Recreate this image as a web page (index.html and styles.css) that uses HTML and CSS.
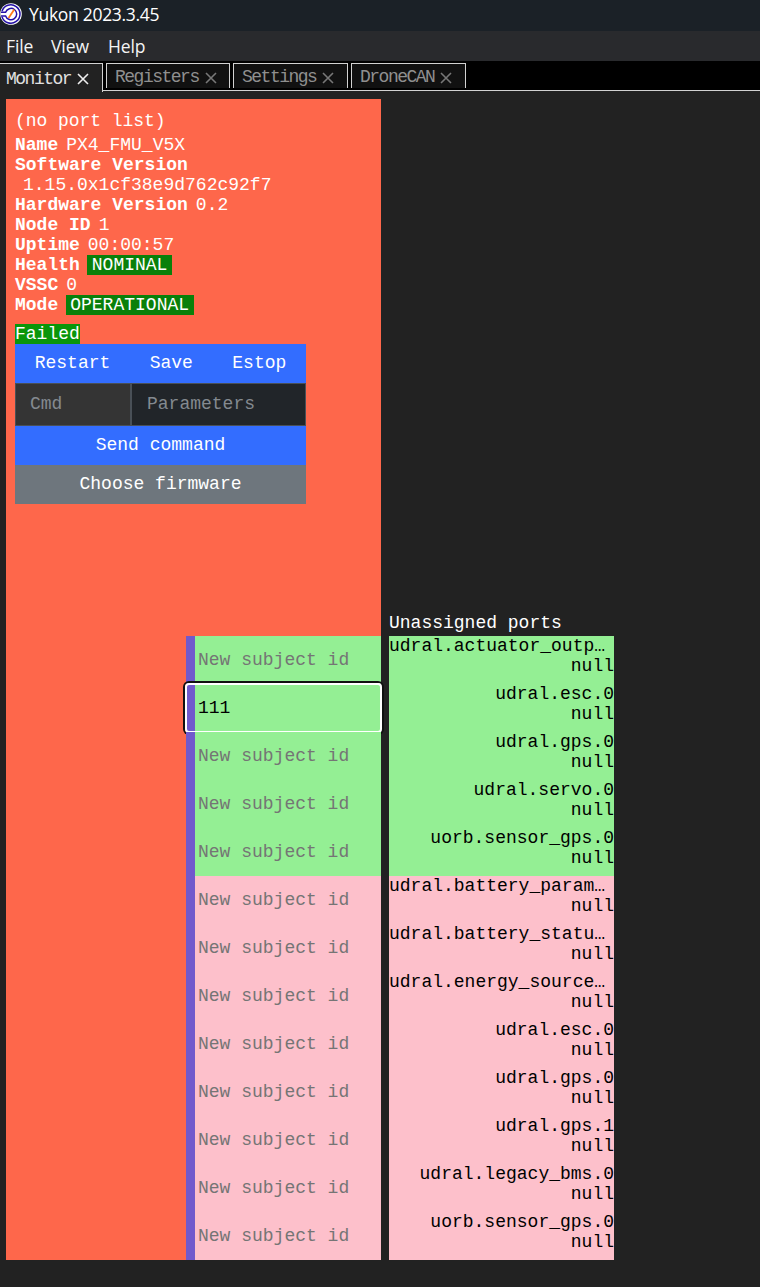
FILE: index.html
```
<!DOCTYPE html>
<html lang="en">
<head>
<meta charset="utf-8">
<title>Yukon 2023.3.45</title>
<link rel="stylesheet" href="styles.css">
</head>
<body>
<header class="titlebar">
  <svg class="logo" width="22" height="22" viewBox="0 0 22 22">
    <circle cx="11" cy="11" r="10.8" fill="#fff"/>
    <path d="M2 8.3A9.2 9.2 0 1 1 2 13.7" fill="none" stroke="#2410a8" stroke-width="1.5"/>
    <path d="M1 9.3H5.6A5.7 5.7 0 1 1 5.6 12.9H1" fill="none" stroke="#2410a8" stroke-width="1.5"/>
    <path d="M8.6 15L14.2 6.6" stroke="#ff7a1a" stroke-width="1.8"/>
  </svg>
  <span class="title">Yukon 2023.3.45</span>
</header>
<nav class="menu"><span class="file">File</span><span class="view">View</span><span class="help">Help</span></nav>
<div class="tabs">
  <div class="tab active"><span>Monitor</span><svg class="close" width="12" height="12" viewBox="0 0 12 12"><path d="M1 1L11 11M11 1L1 11"/></svg></div>
  <div class="tab registers"><span>Registers</span><svg class="close" width="12" height="12" viewBox="0 0 12 12"><path d="M1 1L11 11M11 1L1 11"/></svg></div>
  <div class="tab"><span>Settings</span><svg class="close" width="12" height="12" viewBox="0 0 12 12"><path d="M1 1L11 11M11 1L1 11"/></svg></div>
  <div class="tab"><span>DroneCAN</span><svg class="close" width="12" height="12" viewBox="0 0 12 12"><path d="M1 1L11 11M11 1L1 11"/></svg></div>
</div>
<main class="monitor">
  <section class="node">
    <div class="details">
      <div class="noports">(no port list)</div>
      <div class="line"><b>Name</b><span class="val">PX4_FMU_V5X</span></div>
      <div class="line"><b>Software Version</b></div>
      <div class="line"><span class="val">1.15.0x1cf38e9d762c92f7</span></div>
      <div class="line"><b>Hardware Version</b><span class="val">0.2</span></div>
      <div class="line"><b>Node ID</b><span class="val">1</span></div>
      <div class="line"><b>Uptime</b><span class="val">00:00:57</span></div>
      <div class="line"><b>Health</b><span class="val badge">NOMINAL</span></div>
      <div class="line"><b>VSSC</b><span class="val">0</span></div>
      <div class="line"><b>Mode</b><span class="val badge">OPERATIONAL</span></div>
      <div class="failed">Failed</div>
      <div class="controls">
        <div class="buttons"><span>Restart</span><span>Save</span><span>Estop</span></div>
        <div class="inputs"><span class="cmd">Cmd</span><span class="params">Parameters</span></div>
        <div class="btn send">Send command</div>
        <div class="btn choose">Choose firmware</div>
      </div>
    </div>
    <div class="subjects">
      <div class="subject">New subject id</div>
      <div class="subject focused">111</div>
      <div class="subject">New subject id</div>
      <div class="subject">New subject id</div>
      <div class="subject">New subject id</div>
      <div class="subject pink">New subject id</div>
      <div class="subject pink">New subject id</div>
      <div class="subject pink">New subject id</div>
      <div class="subject pink">New subject id</div>
      <div class="subject pink">New subject id</div>
      <div class="subject pink">New subject id</div>
      <div class="subject pink">New subject id</div>
      <div class="subject pink">New subject id</div>
    </div>
  </section>
  <section class="ports">
    <div class="heading">Unassigned ports</div>
    <div class="port"><span class="cut">udral.actuator_outp…</span><span>null</span></div>
    <div class="port"><span>udral.esc.0</span><span>null</span></div>
    <div class="port"><span>udral.gps.0</span><span>null</span></div>
    <div class="port"><span>udral.servo.0</span><span>null</span></div>
    <div class="port"><span>uorb.sensor_gps.0</span><span>null</span></div>
    <div class="port pink"><span class="cut">udral.battery_param…</span><span>null</span></div>
    <div class="port pink"><span class="cut">udral.battery_statu…</span><span>null</span></div>
    <div class="port pink"><span class="cut">udral.energy_source…</span><span>null</span></div>
    <div class="port pink"><span>udral.esc.0</span><span>null</span></div>
    <div class="port pink"><span>udral.gps.0</span><span>null</span></div>
    <div class="port pink"><span>udral.gps.1</span><span>null</span></div>
    <div class="port pink"><span>udral.legacy_bms.0</span><span>null</span></div>
    <div class="port pink"><span>uorb.sensor_gps.0</span><span>null</span></div>
  </section>
</main>
</body>
</html>
```
FILE: styles.css
```
* { box-sizing: border-box; }
body {
  margin: 0;
  height: 1287px;
  overflow: hidden;
  background: #222;
  color: #fff;
  font: 18px/20px "Courier New", "Liberation Mono", monospace;
  white-space: nowrap;
}
.titlebar, .menu { font-family: "Segoe UI", "Open Sans", "Noto Sans", sans-serif; }
.titlebar {
  display: flex;
  align-items: center;
  height: 31px;
  background: #1b2127;
  padding-bottom: 3px;
}
.logo { display: block; }
.title { margin-left: 7px; font-size: 17.5px; letter-spacing: -0.3px; }
.menu {
  display: flex;
  align-items: center;
  height: 30px;
  padding-left: 6px;
  background: #292a2d;
  font-size: 17.5px;
  letter-spacing: -0.1px;
}
.menu span { color: #f4f4f4; }
.file { width: 45px; }
.view { width: 57px; }
.tabs {
  display: flex;
  gap: 3px;
  height: 30px;
  padding-top: 2px;
  background: #000;
  border-bottom: 1px solid #d2d2d2;
}
.tab {
  display: flex;
  width: 115px;
  height: 25px;
  padding: 3px 0 0 8px;
  border: 1px solid #d2d2d2;
  border-bottom: 0;
  background: #111;
  color: #8f8f8f;
  letter-spacing: -1.5px;
}
.tab.registers { width: 124px; }
.tab.active {
  width: 103px;
  height: 29px;
  padding: 5px 0 0 6px;
  border-left: 0;
  background: #222;
  color: #e0e0e0;
}
.close {
  margin: 5px 0 0 6px;
  fill: none;
  stroke: #777;
  stroke-width: 1.6;
}
.active .close { stroke: #eee; margin-top: 4px; }
.monitor {
  display: flex;
  gap: 8px;
  padding: 8px 0 0 6px;
}
.node {
  display: flex;
  flex-direction: column;
  justify-content: space-between;
  width: 375px;
  height: 1161px;
  background: #fe674b;
}
.details { padding: 12px 0 0 9px; }
.noports { margin-bottom: 4px; letter-spacing: -0.05px; }
.line { display: flex; height: 20px; }
.val { margin-left: 8px; }
.badge { margin-left: 7.5px; padding: 0 4.5px; background: #0a800a; }
.failed {
  width: 65px;
  margin-top: 9px;
  background: #0a960a;
}
.controls { width: 291px; }
.buttons {
  display: flex;
  justify-content: space-around;
  height: 39px;
  background: #336dff;
  line-height: 39px;
}
.inputs {
  display: flex;
  height: 43px;
  line-height: 41px;
  color: #848a90;
}
.inputs span { border: 1px solid #495057; }
.cmd { width: 116px; padding-left: 14px; background: #343434; }
.params { width: 175px; padding-left: 15px; background: #212529; }
.btn { height: 39px; line-height: 39px; text-align: center; }
.send { background: #336dff; }
.choose { background: #6e767d; }
.subjects { width: 195px; margin-left: 180px; }
.subject {
  position: relative;
  z-index: 1;
  height: 48px;
  padding-left: 3px;
  border-left: 9px solid #7159cc;
  background: #94ef94;
  color: #757575;
  line-height: 48px;
}
.subject.focused { z-index: 0; color: #000; }
.focused::after {
  content: "";
  position: absolute;
  inset: -1px -1px -1px -10px;
  border: 2px solid #fff;
  border-radius: 4px;
  box-shadow: 0 0 0 2px #101010;
}
.subject:first-child { z-index: 0; }
.subject.pink, .port.pink { background: #fdc0cb; }
.ports { width: 225px; padding-top: 514px; }
.heading { height: 23px; }
.port {
  display: flex;
  flex-direction: column;
  height: 48px;
  background: #94ef94;
  color: #000;
  text-align: right;
}
.port .cut { text-align: left; }
```
